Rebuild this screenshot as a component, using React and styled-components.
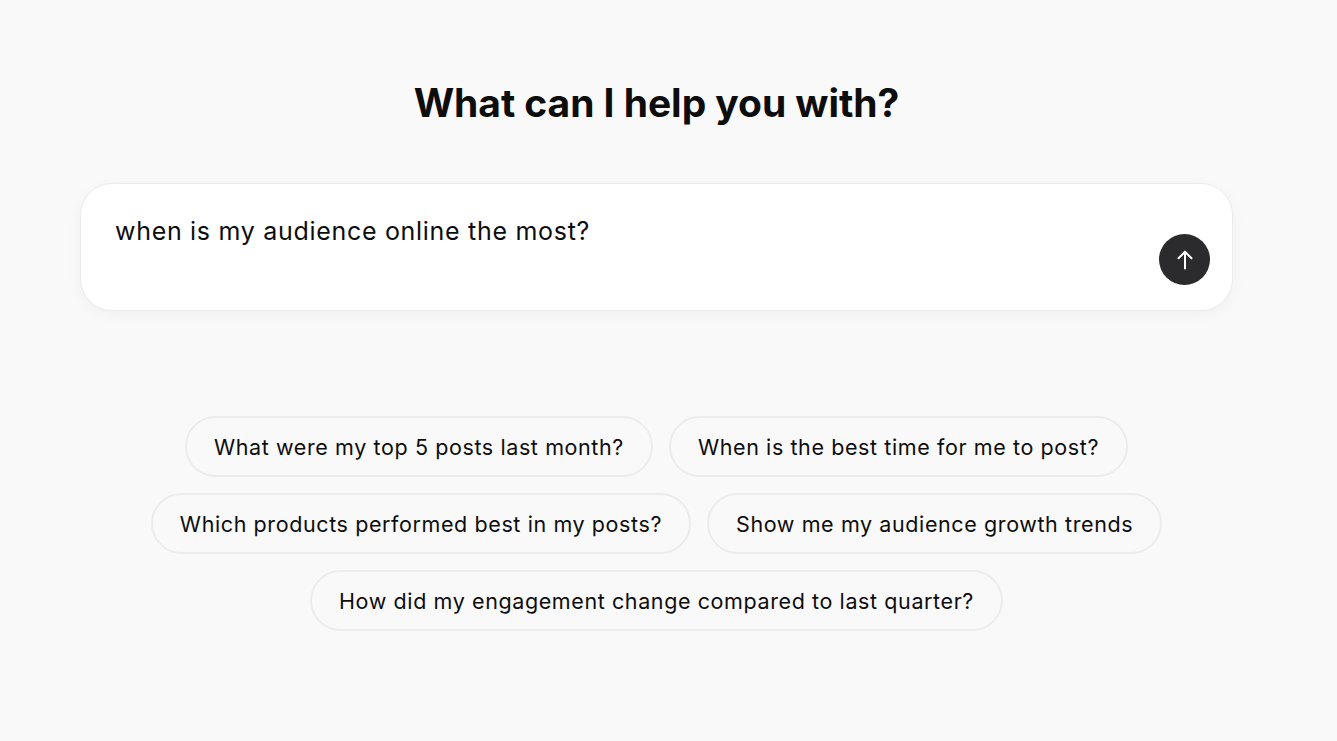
import React from "react";
import styled, { createGlobalStyle } from "styled-components";

const GlobalStyle = createGlobalStyle`
  html, body {
    margin: 0;
    padding: 0;
    background: #f9f9f9;
    font-family: Inter, "Noto Sans", sans-serif;
    color: #0d0d0d;
  }
`;

const Page = styled.main`
  min-height: 741px;
  box-sizing: border-box;
  padding: 78px 104px 0 80px;
  display: flex;
  flex-direction: column;
  align-items: center;
`;

const Title = styled.h1`
  margin: 0;
  font-size: 39px;
  font-weight: 700;
  letter-spacing: -0.05px;
  line-height: 50px;
  color: #0d0d0d;
`;

const Composer = styled.div`
  margin-top: 55px;
  width: 100%;
  height: 128px;
  box-sizing: border-box;
  background: #ffffff;
  border: 1px solid #ebebeb;
  border-radius: 32px;
  box-shadow: 0 4px 14px rgba(0, 0, 0, 0.04);
  padding: 29px 22px 25px 34px;
  display: flex;
  align-items: flex-start;
  gap: 16px;
`;

const Prompt = styled.div`
  flex: 1;
  font-size: 25px;
  letter-spacing: 0.7px;
  line-height: 36px;
  color: #0d0d0d;
`;

const SendButton = styled.button`
  align-self: flex-end;
  flex-shrink: 0;
  width: 51px;
  height: 51px;
  border-radius: 50%;
  border: none;
  background: #2b2b2d;
  color: #ffffff;
  display: flex;
  align-items: center;
  justify-content: center;
  padding: 0;
  cursor: pointer;
`;

const Suggestions = styled.div`
  margin-top: 105px;
  width: 100%;
  display: flex;
  flex-wrap: wrap;
  justify-content: center;
  gap: 16px;
`;

const Chip = styled.button`
  height: 61px;
  box-sizing: border-box;
  padding: 0 27px;
  border-radius: 999px;
  border: 2px solid #ececec;
  background: #f9f9f9;
  font-family: Inter, "Noto Sans", sans-serif;
  font-size: 21.5px;
  letter-spacing: 0.6px;
  color: #0d0d0d;
  cursor: pointer;
`;

const suggestions = [
  "What were my top 5 posts last month?",
  "When is the best time for me to post?",
  "Which products performed best in my posts?",
  "Show me my audience growth trends",
  "How did my engagement change compared to last quarter?",
];

const ArrowUp = () => (
  <svg width="24" height="24" viewBox="0 0 24 24" fill="none" stroke="currentColor" strokeWidth="2" strokeLinecap="round" strokeLinejoin="round">
    <path d="M12 20.5V3.8" />
    <path d="M5.5 10.3 12 3.8l6.5 6.5" />
  </svg>
);

export default function App() {
  return (
    <>
      <GlobalStyle />
      <Page>
        <Title>What can I help you with?</Title>
        <Composer>
          <Prompt>when is my audience online the most?</Prompt>
          <SendButton aria-label="Send">
            <ArrowUp />
          </SendButton>
        </Composer>
        <Suggestions>
          {suggestions.map((s) => (
            <Chip key={s}>{s}</Chip>
          ))}
        </Suggestions>
      </Page>
    </>
  );
}
